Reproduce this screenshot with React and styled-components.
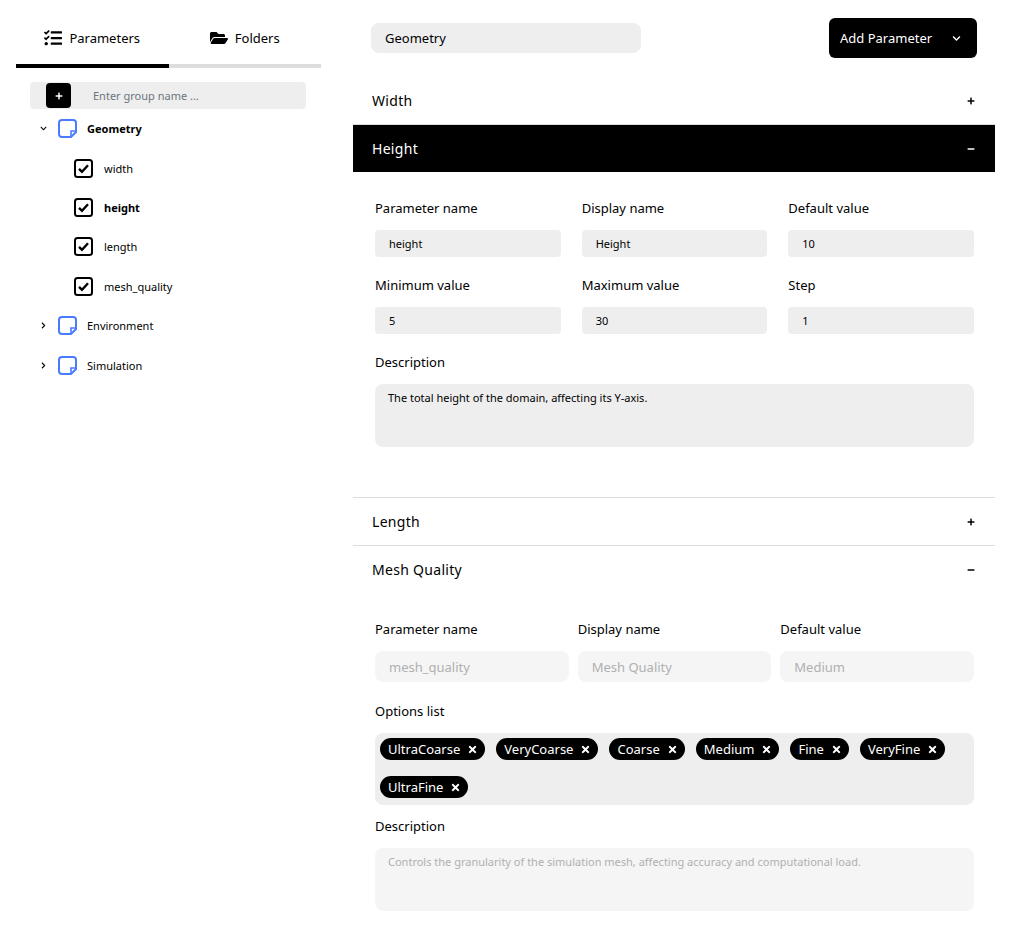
import React from 'react';
import styled, { createGlobalStyle } from 'styled-components';
import { FaTasks, FaFolderOpen, FaChevronDown, FaChevronRight, FaPlus, FaMinus, FaTimes } from 'react-icons/fa';

const GlobalStyle = createGlobalStyle`
  html, body { margin: 0; padding: 0; background: #fff; }
  body { font-family: "Noto Sans", "Open Sans", sans-serif; color: #000; }
`;

const Page = styled.div`
  display: flex;
  width: 1014px;
  height: 925px;
  overflow: hidden;
`;

const Sidebar = styled.aside`
  width: 353px;
  flex: none;
  padding: 16px 32px 0 16px;
  box-sizing: border-box;
`;

const Tabs = styled.div`
  display: flex;
  height: 52px;
  background: linear-gradient(#ddd, #ddd) bottom / 100% 4px no-repeat;
`;

const Tab = styled.div`
  flex: 1;
  display: flex;
  align-items: center;
  justify-content: center;
  gap: 7px;
  padding-bottom: 4px;
  box-sizing: border-box;
  font-size: 13px;
  border-bottom: 4px solid ${p => (p.$active ? '#000' : 'transparent')};
  svg { font-size: 18px; }
`;

const GroupForm = styled.div`
  display: flex;
  align-items: center;
  height: 27px;
  margin: 14px 15px 0 14px;
  padding-left: 16px;
  background: #eee;
  border-radius: 4px;
`;

const SquareButton = styled.div`
  width: 25px;
  height: 25px;
  background: #000;
  color: #fff;
  border-radius: 4px;
  display: flex;
  align-items: center;
  justify-content: center;
  svg { font-size: 8px; }
`;

const GroupPlaceholder = styled.span`
  margin-left: 22px;
  font-size: 11px;
  color: #6c757d;
`;

const Tree = styled.div`
  padding: 0 0 0 23px;
`;

const TreeRow = styled.div`
  display: flex;
  align-items: center;
  height: 39.4px;
  font-size: 11px;
  font-weight: ${p => (p.$bold ? 700 : 400)};
  padding-left: ${p => (p.$child ? '35px' : '0')};
`;

const Caret = styled.span`
  width: 19px;
  display: flex;
  align-items: center;
  svg { font-size: 7px; margin-left: 1px; }
`;

const RowLabel = styled.span`
  margin-left: ${p => p.$gap}px;
`;

const Main = styled.main`
  width: 642px;
  flex: none;
  display: flex;
  flex-direction: column;
`;

const TopBar = styled.div`
  display: flex;
  justify-content: space-between;
  align-items: center;
  height: 40px;
  margin-top: 18px;
  padding: 0 18px;
  margin-bottom: 19px;
`;

const GroupName = styled.div`
  width: 270px;
  height: 30px;
  box-sizing: border-box;
  padding-left: 14px;
  background: #eee;
  border-radius: 8px;
  font-size: 13px;
  display: flex;
  align-items: center;
`;

const AddButton = styled.div`
  width: 148px;
  height: 40px;
  background: #000;
  color: #fff;
  border-radius: 6px;
  box-sizing: border-box;
  padding: 0 16px 0 11px;
  display: flex;
  align-items: center;
  justify-content: space-between;
  font-size: 13px;
  svg { font-size: 9px; }
`;

const AccordionHeader = styled.div`
  display: flex;
  align-items: center;
  justify-content: space-between;
  height: 47px;
  padding: 0 20px 0 19px;
  font-size: 14px;
  letter-spacing: 0.3px;
  background: ${p => (p.$dark ? '#000' : '#fff')};
  color: ${p => (p.$dark ? '#fff' : '#000')};
  border-top: ${p => (p.$line ? '1px solid #ddd' : 'none')};
  box-sizing: content-box;
  svg { font-size: 8px; }
`;

const Body = styled.div`
  padding: ${p => p.$pad};
`;

const Fields = styled.div`
  display: grid;
  grid-template-columns: repeat(3, 1fr);
  column-gap: ${p => p.$gap}px;
`;

const Field = styled.div`
  display: flex;
  flex-direction: column;
`;

const Label = styled.div`
  font-size: 13px;
  line-height: 18px;
  margin-bottom: ${p => p.$mb ?? 13}px;
`;

const Input = styled.div`
  height: ${p => p.$h ?? 27}px;
  margin-bottom: ${p => p.$mb ?? 19}px;
  padding-left: 14px;
  background: ${p => (p.$muted ? '#f5f5f5' : '#eee')};
  color: ${p => (p.$muted ? '#b0b0b0' : '#000')};
  border-radius: ${p => (p.$muted ? 8 : 4)}px;
  font-size: ${p => (p.$muted ? 13 : 11)}px;
  display: flex;
  align-items: center;
`;

const TextArea = styled.div`
  height: 63px;
  box-sizing: border-box;
  padding: 6px 13px;
  background: ${p => (p.$muted ? '#f5f5f5' : '#eee')};
  color: ${p => (p.$muted ? '#b0b0b0' : '#000')};
  border-radius: 8px;
  font-size: 11px;
  line-height: 15px;
`;

const OptionsBox = styled.div`
  display: flex;
  flex-wrap: wrap;
  gap: 14px 11px;
  height: 72px;
  margin-bottom: 12px;
  box-sizing: border-box;
  padding: 5px;
  background: #eee;
  border-radius: 8px;
`;

const Chip = styled.div`
  height: 22px;
  display: flex;
  align-items: center;
  gap: 7px;
  padding: 0 7px 0 8px;
  background: #000;
  color: #fff;
  border-radius: 11px;
  font-size: 13px;
  svg { font-size: 11px; }
`;

const StickyIcon = () => (
  <svg width="19" height="19" viewBox="0 0 19 19" fill="none" stroke="#4b7bff" strokeWidth="2">
    <path d="M4 1h11a3 3 0 0 1 3 3v9l-5 5H4a3 3 0 0 1-3-3V4a3 3 0 0 1 3-3z" />
    <path d="M18 12h-5v6" strokeWidth="1.6" />
  </svg>
);

const CheckIcon = () => (
  <svg width="19" height="19" viewBox="0 0 19 19" fill="none" stroke="#000">
    <rect x="1" y="1" width="17" height="17" rx="2.5" strokeWidth="2" />
    <path d="M5 9.8l3 3 6-6.6" strokeWidth="2.4" />
  </svg>
);

const params = [
  { name: 'width' },
  { name: 'height', bold: true },
  { name: 'length' },
  { name: 'mesh_quality' },
];

const heightFields = [
  { label: 'Parameter name', value: 'height' },
  { label: 'Display name', value: 'Height' },
  { label: 'Default value', value: '10' },
  { label: 'Minimum value', value: '5' },
  { label: 'Maximum value', value: '30' },
  { label: 'Step', value: '1' },
];

const meshFields = [
  { label: 'Parameter name', value: 'mesh_quality' },
  { label: 'Display name', value: 'Mesh Quality' },
  { label: 'Default value', value: 'Medium' },
];

const options = ['UltraCoarse', 'VeryCoarse', 'Coarse', 'Medium', 'Fine', 'VeryFine', 'UltraFine'];

export default function App() {
  return (
    <Page>
      <GlobalStyle />
      <Sidebar>
        <Tabs>
          <Tab $active><FaTasks /> Parameters</Tab>
          <Tab><FaFolderOpen /> Folders</Tab>
        </Tabs>
        <GroupForm>
          <SquareButton><FaPlus /></SquareButton>
          <GroupPlaceholder>Enter group name ...</GroupPlaceholder>
        </GroupForm>
        <Tree>
          <TreeRow $bold>
            <Caret><FaChevronDown /></Caret>
            <StickyIcon />
            <RowLabel $gap={10}>Geometry</RowLabel>
          </TreeRow>
          {params.map(p => (
            <TreeRow key={p.name} $child $bold={p.bold}>
              <CheckIcon />
              <RowLabel $gap={11}>{p.name}</RowLabel>
            </TreeRow>
          ))}
          <TreeRow>
            <Caret><FaChevronRight /></Caret>
            <StickyIcon />
            <RowLabel $gap={10}>Environment</RowLabel>
          </TreeRow>
          <TreeRow>
            <Caret><FaChevronRight /></Caret>
            <StickyIcon />
            <RowLabel $gap={10}>Simulation</RowLabel>
          </TreeRow>
        </Tree>
      </Sidebar>
      <Main>
        <TopBar>
          <GroupName>Geometry</GroupName>
          <AddButton>Add Parameter <FaChevronDown /></AddButton>
        </TopBar>
        <AccordionHeader>Width <FaPlus /></AccordionHeader>
        <AccordionHeader $dark $line>Height <FaMinus /></AccordionHeader>
        <Body $pad="27px 21px 50px 22px">
          <Fields $gap={21}>
            {heightFields.map(f => (
              <Field key={f.label}>
                <Label>{f.label}</Label>
                <Input $mb={19}>{f.value}</Input>
              </Field>
            ))}
          </Fields>
          <Label>Description</Label>
          <TextArea>The total height of the domain, affecting its Y-axis.</TextArea>
        </Body>
        <AccordionHeader $line>Length <FaPlus /></AccordionHeader>
        <AccordionHeader $line>Mesh Quality <FaMinus /></AccordionHeader>
        <Body $pad="27px 21px 0 22px">
          <Fields $gap={9}>
            {meshFields.map(f => (
              <Field key={f.label}>
                <Label>{f.label}</Label>
                <Input $muted $h={31} $mb={20}>{f.value}</Input>
              </Field>
            ))}
          </Fields>
          <Label>Options list</Label>
          <OptionsBox>
            {options.map(o => <Chip key={o}>{o} <FaTimes /></Chip>)}
          </OptionsBox>
          <Label>Description</Label>
          <TextArea $muted>Controls the granularity of the simulation mesh, affecting accuracy and computational load.</TextArea>
        </Body>
      </Main>
    </Page>
  );
}
